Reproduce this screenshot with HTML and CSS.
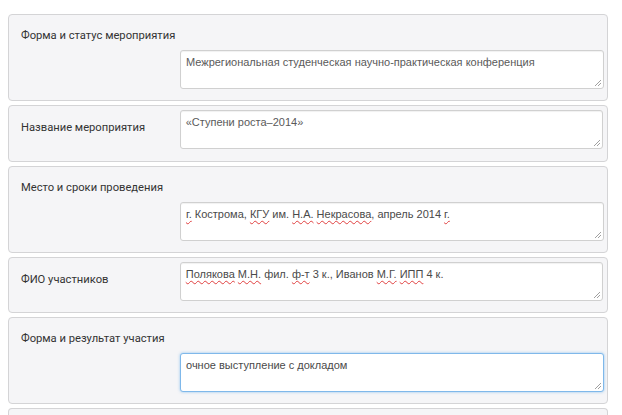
FILE: index.html
```html
<!DOCTYPE html>
<html lang="ru">
<head>
<meta charset="utf-8">
<title>Мероприятие</title>
<link rel="stylesheet" href="styles.css">
</head>
<body>
<div class="form">
  <div class="panel stacked">
    <div class="label">Форма и статус мероприятия</div>
    <div class="field">Межрегиональная студенческая научно-практическая конференция<span class="grip"><svg width="8" height="8" viewBox="0 0 8 8"><path d="M7 1L1 7M7 4L4 7" stroke="#a0a0a0" stroke-width="1"/></svg></span></div>
  </div>
  <div class="panel inline">
    <div class="label">Название мероприятия</div>
    <div class="field">«Ступени роста–2014»<span class="grip"><svg width="8" height="8" viewBox="0 0 8 8"><path d="M7 1L1 7M7 4L4 7" stroke="#a0a0a0" stroke-width="1"/></svg></span></div>
  </div>
  <div class="panel stacked">
    <div class="label">Место и сроки проведения</div>
    <div class="field dark"><span class="sp">г.</span> Кострома, <span class="sp">КГУ</span> им. <span class="sp">Н.А.</span> <span class="sp">Некрасова</span>, апрель 2014 <span class="sp">г.</span><span class="grip"><svg width="8" height="8" viewBox="0 0 8 8"><path d="M7 1L1 7M7 4L4 7" stroke="#a0a0a0" stroke-width="1"/></svg></span></div>
  </div>
  <div class="panel inline short">
    <div class="label">ФИО участников</div>
    <div class="field dark"><span class="sp">Полякова</span> <span class="sp">М.Н.</span> фил. <span class="sp">ф-т</span> 3 к., Иванов <span class="sp">М.Г.</span> <span class="sp">ИПП</span> 4 к.<span class="grip"><svg width="8" height="8" viewBox="0 0 8 8"><path d="M7 1L1 7M7 4L4 7" stroke="#a0a0a0" stroke-width="1"/></svg></span></div>
  </div>
  <div class="panel stacked">
    <div class="label">Форма и результат участия</div>
    <div class="field dark focus">очное выступление с докладом<span class="grip"><svg width="8" height="8" viewBox="0 0 8 8"><path d="M7 1L1 7M7 4L4 7" stroke="#a0a0a0" stroke-width="1"/></svg></span></div>
  </div>
  <div class="panel tail"></div>
</div>
</body>
</html>
```
FILE: styles.css
```css
html, body {
  margin: 0;
  padding: 0;
  background: #ffffff;
}
body {
  height: 415px;
  overflow: hidden;
}
.form {
  padding: 14px 0 0 8px;
  width: 600px;
  display: flex;
  flex-direction: column;
  gap: 4px;
}
.panel {
  box-sizing: border-box;
  background: #f5f5f7;
  border: 1px solid #d4d4d6;
  border-radius: 4px;
  padding: 0 4px 11px 12px;
}
.stacked {
  height: 87px;
  padding-top: 12px;
  display: flex;
  flex-direction: column;
}
.inline {
  height: 57px;
  padding-top: 4px;
  display: flex;
  flex-direction: row;
  align-items: flex-start;
}
.inline.short {
  height: 56px;
}
.tail {
  height: 7px;
  padding: 0;
  border-bottom: none;
  border-radius: 4px 4px 0 0;
}
.label {
  font-family: Roboto, "Liberation Sans", sans-serif;
  font-size: 11.2px;
  line-height: 17px;
  color: #333333;
  height: 17px;
}
.inline .label {
  width: 159px;
  margin-top: 9px;
}
.stacked .field {
  margin-top: 6px;
  margin-left: 159px;
}
.field {
  position: relative;
  box-sizing: border-box;
  width: 424px;
  height: 39px;
  background: #ffffff;
  border: 1px solid #d0d0d0;
  border-radius: 3px;
  box-shadow: inset 0 1px 1px rgba(0,0,0,0.06);
  padding: 4px 5px;
  font-family: "Liberation Sans", Arial, sans-serif;
  font-size: 11px;
  line-height: 14px;
  color: #5a5a5a;
}
.field.dark {
  color: #4a4a4a;
}
.field.focus {
  border-color: #7fb8ea;
  box-shadow: 0 0 3px rgba(102,175,233,0.7);
}
.sp {
  text-decoration: underline wavy #e04040;
  text-decoration-thickness: 1px;
  text-underline-offset: 2px;
}
.grip {
  position: absolute;
  right: 1px;
  bottom: 1px;
  width: 8px;
  height: 8px;
  line-height: 0;
}
```
